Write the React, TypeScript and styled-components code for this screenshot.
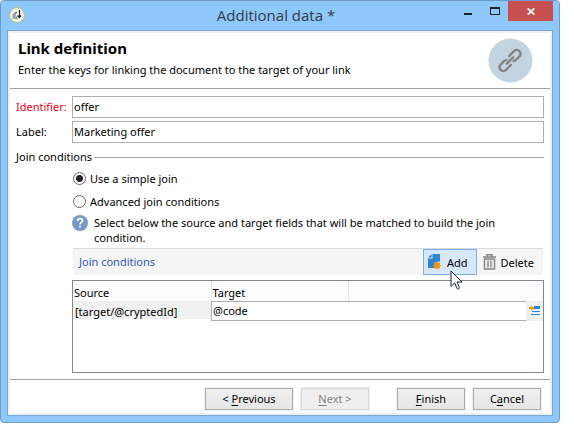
import React, { useState } from "react";
import styled, { createGlobalStyle, css } from "styled-components";

const GlobalStyle = createGlobalStyle`
  *, *::before, *::after { box-sizing: border-box; }
  body { margin: 0; background: #fff; }
  body, button, input {
    font-family: "Noto Sans", "Open Sans", sans-serif;
    font-size: 11px;
    line-height: 15px;
    color: #000;
  }
`;

const Page = styled.main`
  padding: 0 14px 14px 0;
`;

const WindowFrame = styled.section`
  display: flex;
  flex-direction: column;
  padding: 0 6px 6px;
  border: 1px solid #6e9bc5;
  border-radius: 4px;
  background: #8ec7f9;
`;

const TitleBar = styled.header`
  display: grid;
  grid-template-columns: 1fr auto 1fr;
  height: 29px;
`;

const AppIcon = styled.svg`
  width: 16px;
  height: 16px;
  margin: 6px 0 0 2px;
`;

const WindowTitle = styled.h1`
  margin: 0;
  padding: 4px 8px 0 0;
  font-family: "Open Sans", "Noto Sans", sans-serif;
  font-size: 15px;
  font-weight: 400;
  line-height: 20px;
  color: #303c48;
`;

const Controls = styled.div`
  display: flex;
  justify-content: flex-end;
`;

const WindowButton = styled.button<{ $close?: boolean }>`
  display: grid;
  place-items: center;
  width: ${(p) => (p.$close ? 45 : 27)}px;
  height: 20px;
  padding: 0;
  border: 0;
  background: ${(p) => (p.$close ? "#c75050" : "transparent")};
`;

const Dialog = styled.form`
  border: 1px solid #76a9d9;
  background: #fff;
  box-shadow: inset 0 0 0 2px #f1f1f1;
  padding: 2px;
`;

const Intro = styled.div`
  display: flex;
  justify-content: space-between;
  height: 56px;
  padding: 5px 17px 0 8px;
  border-bottom: 1px solid #a0a0a0;
`;

const Heading = styled.h2`
  margin: 0;
  font-size: 15px;
  line-height: 20px;
  font-weight: 700;
`;

const Summary = styled.p`
  margin: 4px 0 0;
`;

const LinkBadge = styled.svg`
  flex: none;
  width: 45px;
  height: 45px;
`;

const Body = styled.div`
  display: flex;
  flex-direction: column;
  padding: 7px 6px 6px;
  border-bottom: 1px solid #a0a0a0;
`;

const Field = styled.div`
  display: grid;
  grid-template-columns: 56px 1fr;
  align-items: center;
  margin-bottom: 3px;
`;

const FieldLabel = styled.label<{ $required?: boolean }>`
  padding-bottom: 1px;
  color: ${(p) => (p.$required ? "#f00018" : "#000")};
`;

const TextBox = styled.input`
  width: 100%;
  min-width: 0;
  height: 22px;
  padding: 0 1px 2px;
  border: 1px solid #abadb3;
  border-radius: 0;
  background: #fff;
  outline: 0;
`;

const Group = styled.fieldset`
  min-width: 0;
  margin: 2px 0 0;
  padding: 0;
  border: 0;
`;

const GroupTitle = styled.legend`
  display: flex;
  align-items: center;
  gap: 2px;
  width: 100%;
  padding: 0;
  line-height: 18px;

  &::after {
    content: "";
    flex: 1;
    height: 1px;
    background: #a0a0a0;
  }
`;

const GroupBody = styled.div`
  display: flex;
  flex-direction: column;
  padding: 1px 0 0 56px;
`;

const Option = styled.label`
  display: flex;
  align-items: center;
  gap: 4px;
  height: 23px;
  padding-left: 1px;
`;

const Radio = styled.input`
  appearance: none;
  flex: none;
  width: 13px;
  height: 13px;
  margin: 0;
  border: 1px solid #666;
  border-radius: 50%;
  background: #fff;

  &:checked {
    background: radial-gradient(circle, #212121 0 3px, #fff 4px);
  }
`;

const Hint = styled.div`
  display: flex;
  gap: 6px;
`;

const HintIcon = styled.svg`
  flex: none;
  width: 16px;
  height: 16px;
  margin-top: 2px;
`;

const HintText = styled.p`
  margin: 2px 0 0;
  padding-right: 24px;
`;

const Toolbar = styled.div`
  display: flex;
  align-items: stretch;
  height: 27px;
  margin: 3px 1px 0;
  border-top: 1px solid #d9d9d9;
  background: #f5f5f5;
`;

const ToolbarTitle = styled.h3`
  flex: 1;
  margin: 0;
  padding: 5px 0 0 6px;
  font-size: 11px;
  font-weight: 400;
  color: #3058c0;
`;

const ToolButton = styled.button<{ $active?: boolean }>`
  position: relative;
  display: flex;
  align-items: center;
  gap: 3px;
  padding: 0 8px 0 4px;
  border: 1px solid ${(p) => (p.$active ? "#7db1e9" : "transparent")};
  background: ${(p) => (p.$active ? "#d5e7f8" : "transparent")};
`;

const ToolIcon = styled.svg`
  flex: none;
  width: 16px;
  height: 18px;
`;

const Pointer = styled.svg`
  position: absolute;
  left: 26px;
  top: 20px;
  width: 13px;
  height: 20px;
  z-index: 1;
  pointer-events: none;
`;

const TableBox = styled.div`
  height: 93px;
  margin-top: 5px;
  border: 1px solid #828790;
`;

const JoinTable = styled.table`
  width: 100%;
  table-layout: fixed;
  border-collapse: collapse;
`;

const HeadCell = styled.th<{ $width?: number }>`
  ${(p) => p.$width && css`width: ${p.$width}px;`}
  height: 20px;
  padding: 2px 1px 0;
  border-right: ${(p) => (p.$width ? "1px solid #dfe9f5" : "0")};
  background: #fcfcfc;
  font-weight: 400;
  text-align: left;
`;

const SourceCell = styled.td`
  height: 20px;
  padding: 0 2px;
  background: linear-gradient(#f0f0f0 0 18px, #fff 18px);
  white-space: nowrap;
`;

const TargetCell = styled.td`
  padding: 0;
`;

const CellEditor = styled.div`
  display: flex;
  height: 20px;
`;

const CellInput = styled.input`
  flex: 1;
  min-width: 0;
  height: 20px;
  padding: 0 1px 2px;
  border: 1px solid #abadb3;
  border-right: 0;
  border-radius: 0;
  outline: 0;
`;

const PickButton = styled.button`
  display: grid;
  place-items: center;
  width: 17px;
  padding: 0;
  border: 0;
  background: #f0f0f0;
`;

const Footer = styled.footer`
  display: flex;
  justify-content: flex-end;
  gap: 8px;
  padding: 8px 9px 3px;
`;

const PushButton = styled.button<{ $wide?: boolean; $last?: boolean }>`
  width: ${(p) => (p.$wide ? 88 : 68)}px;
  height: 22px;
  margin-right: ${(p) => (p.$last ? 20 : 0)}px;
  padding: 0 0 1px;
  border: 1px solid #acacac;
  background: linear-gradient(#f0f0f0, #e5e5e5);
  box-shadow: 0 0 0 1px #f0f0f0;

  &:disabled {
    border-color: #d9d9d9;
    background: #efefef;
    color: #838383;
  }
`;

const Mnemonic = styled.u`
  text-underline-offset: 2px;
`;

export default function App() {
  const [mode, setMode] = useState("simple");

  return (
    <>
      <GlobalStyle />
      <Page>
        <WindowFrame aria-labelledby="window-title">
          <TitleBar>
            <AppIcon viewBox="0 0 16 16" aria-hidden="true">
              <circle cx="8" cy="8" r="7.4" fill="#f6f8f3" stroke="#a8c46c" />
              <path d="M3.5 7 5.5 6v6h-2z" fill="#9ba19b" />
              <path d="M5.5 5.5 8 4.5V6L6.5 7v5h-1z" fill="#6c726e" />
              <path d="M10.5 3v7M8.5 8.500l1.800 2L12 8.500" stroke="#222" strokeWidth="1.2" fill="none" />
              <path d="M7.5 9.500V12H9" stroke="#8d938e" fill="none" />
            </AppIcon>
            <WindowTitle id="window-title">Additional data *</WindowTitle>
            <Controls>
              <WindowButton type="button" aria-label="Minimize">
                <svg width="8" height="12"><path d="M0 8h8v2H0z" fill="#222" /></svg>
              </WindowButton>
              <WindowButton type="button" aria-label="Maximize">
                <svg width="10" height="8">
                  <path d="M0 0h10v8H0zM1 2v5h8V2z" fill="#222" fillRule="evenodd" />
                </svg>
              </WindowButton>
              <WindowButton type="button" aria-label="Close" $close>
                <svg width="8" height="7">
                  <path d="M.7.3 7.3 6.7M7.3.3.7 6.7" stroke="#fff" strokeWidth="1.7" />
                </svg>
              </WindowButton>
            </Controls>
          </TitleBar>

          <Dialog onSubmit={(e) => e.preventDefault()}>
            <Intro>
              <div>
                <Heading>Link definition</Heading>
                <Summary>Enter the keys for linking the document to the target of your link</Summary>
              </div>
              <LinkBadge viewBox="0 0 45 45" aria-hidden="true">
                <circle cx="22.5" cy="22.5" r="22" fill="#c3d4e0" />
                <g
                  transform="translate(22 22.5) rotate(-45)"
                  fill="none"
                  stroke="#858585"
                  strokeWidth="2.4"
                  strokeLinecap="round"
                >
                  <path d="M2.5-3.8H9.500a3.800 3.800 0 0 1 0 7.600H5A3.800 3.800 0 0 1 2.200 2.800" />
                  <path d="M-2.5 3.800H-9.500a3.800 3.800 0 0 1 0-7.600H-5A3.800 3.800 0 0 1-2.200-2.800" />
                  <path d="M-4.5 0h9" />
                </g>
              </LinkBadge>
            </Intro>

            <Body>
              <Field>
                <FieldLabel htmlFor="identifier" $required>Identifier:</FieldLabel>
                <TextBox id="identifier" defaultValue="offer" />
              </Field>
              <Field>
                <FieldLabel htmlFor="label">Label:</FieldLabel>
                <TextBox id="label" defaultValue="Marketing offer" />
              </Field>

              <Group>
                <GroupTitle>Join conditions</GroupTitle>
                <GroupBody>
                  <Option>
                    <Radio type="radio" name="join" checked={mode === "simple"} onChange={() => setMode("simple")} />
                    Use a simple join
                  </Option>
                  <Option>
                    <Radio type="radio" name="join" checked={mode === "advanced"} onChange={() => setMode("advanced")} />
                    Advanced join conditions
                  </Option>
                  <Hint>
                    <HintIcon viewBox="0 0 16 16" aria-hidden="true">
                      <circle cx="8" cy="8" r="8" fill="#7899c8" />
                      <path
                        d="M5.5 6.1C5.5 4.4 6.6 3.6 8 3.6s2.5.8 2.5 2.1C10.5 7.3 8 7.4 8 9.5"
                        fill="none"
                        stroke="#fff"
                        strokeWidth="1.7"
                      />
                      <path d="M7.1 10.8h1.800v1.800H7.1z" fill="#fff" />
                    </HintIcon>
                    <HintText>
                      Select below the source and target fields that will be matched to build the join condition.
                    </HintText>
                  </Hint>

                  <Toolbar>
                    <ToolbarTitle>Join conditions</ToolbarTitle>
                    <ToolButton type="button" $active>
                      <ToolIcon viewBox="0 0 16 18" aria-hidden="true">
                        <path d="M4.5 1H12v7.500L8 9l-1.500 3L7 15H0V5.500h4.500z" fill="#2f87d3" />
                        <path d="M3.5 1v3.500H0z" fill="#2f87d3" />
                        <g stroke="#f0960c" strokeWidth="1.2">
                          <path d="M9 8.500v8M5 12.500h8M6.200 9.700l5.600 5.600M11.800 9.700l-5.600 5.600" />
                        </g>
                        <circle cx="9" cy="12.5" r="3" fill="#f0960c" />
                      </ToolIcon>
                      Add
                      <Pointer viewBox="0 0 13 20" aria-hidden="true">
                        <path
                          d="M1 1v15.500l3.700-3.600 2.500 5.800c.5.800 2.500 0 2.200-1L7 12h5z"
                          fill="#fff"
                          stroke="#1c2430"
                          strokeWidth="1"
                        />
                      </Pointer>
                    </ToolButton>
                    <ToolButton type="button">
                      <ToolIcon viewBox="0 0 16 18" aria-hidden="true">
                        <path d="M1 4h13M5 3.500V1.800h5v1.700" fill="none" stroke="#858585" strokeWidth="1.5" />
                        <path d="M2.500 6h10v10h-10zM6 7.500v7M9 7.500v7" fill="none" stroke="#858585" strokeWidth="1.5" />
                      </ToolIcon>
                      Delete
                    </ToolButton>
                  </Toolbar>

                  <TableBox>
                    <JoinTable>
                      <thead>
                        <tr>
                          <HeadCell scope="col" $width={138}>Source</HeadCell>
                          <HeadCell scope="col" $width={137}>Target</HeadCell>
                          <HeadCell scope="col" aria-label="Actions" />
                        </tr>
                      </thead>
                      <tbody>
                        <tr>
                          <SourceCell>[target/@cryptedId]</SourceCell>
                          <TargetCell colSpan={2}>
                            <CellEditor>
                              <CellInput aria-label="Target" defaultValue="@code" />
                              <PickButton type="button" aria-label="Edit expression">
                                <svg width="11" height="10" aria-hidden="true">
                                  <path d="M5 0h6v3H5zM3 5h8v1H3zM2 8h9v1H2z" fill="#2f87d3" />
                                  <path d="M0 1h2V0h1v1h2v2H3v1H2V3H0z" fill="#f0960c" />
                                </svg>
                              </PickButton>
                            </CellEditor>
                          </TargetCell>
                        </tr>
                      </tbody>
                    </JoinTable>
                  </TableBox>
                </GroupBody>
              </Group>
            </Body>

            <Footer>
              <PushButton type="button" $wide>&lt; <Mnemonic>P</Mnemonic>revious</PushButton>
              <PushButton type="button" disabled $last><Mnemonic>N</Mnemonic>ext &gt;</PushButton>
              <PushButton type="submit"><Mnemonic>F</Mnemonic>inish</PushButton>
              <PushButton type="button">C<Mnemonic>a</Mnemonic>ncel</PushButton>
            </Footer>
          </Dialog>
        </WindowFrame>
      </Page>
    </>
  );
}
